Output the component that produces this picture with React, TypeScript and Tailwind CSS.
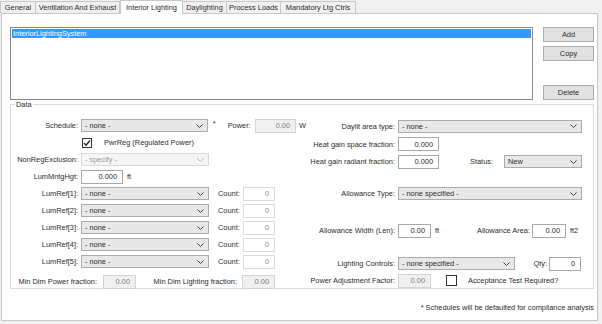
import React from 'react';

const tabs = [
  { label: 'General', width: 'w-[36px]' },
  { label: 'Ventilation And Exhaust', width: 'w-[84px]' },
  { label: 'Interior Lighting', width: 'w-[63px]', active: true },
  { label: 'Daylighting', width: 'w-[44px]' },
  { label: 'Process Loads', width: 'w-[54px]' },
  { label: 'Mandatory Ltg Ctrls', width: 'w-[75px]' },
];

function Chevron({ disabled }: { disabled?: boolean }) {
  return (
    <svg width="7" height="4" viewBox="0 0 7 4" className="shrink-0">
      <path
        d="M0.5 0.5 L3.5 3.5 L6.5 0.5"
        fill="none"
        stroke={disabled ? '#b4b4b4' : '#404040'}
        strokeWidth="1"
      />
    </svg>
  );
}

function Combo({
  value,
  className,
  disabled,
}: {
  value: string;
  className: string;
  disabled?: boolean;
}) {
  return (
    <div
      className={`flex h-[13px] items-center justify-between border pl-[3px] pr-[4px] ${
        disabled
          ? 'border-[#d9d9d9] bg-[#f5f5f5] text-[#9b9b9b]'
          : 'border-[#acacac] bg-[#e8e8e8] text-[#2b2b2b]'
      } ${className}`}
    >
      <span className="whitespace-nowrap">{value}</span>
      <Chevron disabled={disabled} />
    </div>
  );
}

function Field({
  value,
  className,
  kind = 'normal',
}: {
  value: string;
  className: string;
  kind?: 'normal' | 'disabled' | 'count';
}) {
  const look =
    kind === 'disabled'
      ? 'border-[#d4d4d4] bg-[#f0f0f0] text-[#7d7d7d]'
      : kind === 'count'
        ? 'border-[#dadada] bg-white text-[#8c8c8c]'
        : 'border-[#a8a8a8] bg-white text-[#2b2b2b]';
  return (
    <div className={`flex h-[14px] items-center justify-end border pr-[5px] ${look} ${className}`}>
      {value}
    </div>
  );
}

function CheckBox({ checked, className }: { checked?: boolean; className: string }) {
  return (
    <div className={`flex h-[10px] w-[10px] items-center justify-center border border-[#333333] bg-white ${className}`}>
      {checked && (
        <svg width="8" height="8" viewBox="0 0 8 8">
          <path d="M1 4 L3 6.2 L7 1.5" fill="none" stroke="#222" strokeWidth="1.3" />
        </svg>
      )}
    </div>
  );
}

function Label({ children, className }: { children: React.ReactNode; className: string }) {
  return <span className={`shrink-0 whitespace-nowrap text-right ${className}`}>{children}</span>;
}

export default function App() {
  return (
    <div className="h-[324px] w-[602px] overflow-hidden bg-[#f0f0f0] font-['Liberation_Sans',Arial,sans-serif] text-[7.4px] leading-[9px] text-[#2b2b2b]">
      {/* tab strip */}
      <div className="relative z-10 flex h-[13px] items-end">
        {tabs.map((t, i) =>
          t.active ? (
            <div
              key={t.label}
              className={`-mb-px flex h-[14px] items-center justify-center border-x border-t border-[#c8c8c8] bg-white ${t.width}`}
            >
              {t.label}
            </div>
          ) : (
            <div
              key={t.label}
              className={`flex h-[12px] items-center justify-center border-r border-t border-[#c8c8c8] bg-[#f0f0f0] ${
                i === 0 ? 'border-l' : ''
              } ${t.width}`}
            >
              {t.label}
            </div>
          ),
        )}
      </div>

      {/* panel */}
      <div className="ml-px h-[308px] w-[597px] border border-[#c8c8c8] bg-white pl-[8px] pt-[13px]">
        <div className="flex">
          <div className="h-[73px] w-[523px] border border-[#828790] bg-white p-px">
            <div className="h-[9px] bg-[#3399ff] px-px text-white">InteriorLightingSystem</div>
          </div>
          <div className="ml-[10px] flex h-[73px] w-[51px] flex-col justify-between">
            <div className="flex flex-col gap-[4px]">
              <button className="flex h-[15px] items-center justify-center border border-[#adadad] bg-[#e1e1e1]">
                Add
              </button>
              <button className="flex h-[15px] items-center justify-center border border-[#adadad] bg-[#e1e1e1]">
                Copy
              </button>
            </div>
            <button className="flex h-[15px] items-center justify-center border border-[#adadad] bg-[#e1e1e1]">
              Delete
            </button>
          </div>
        </div>

        {/* Data group */}
        <div className="relative mt-[4px] h-[185px] w-[584px] border border-[#dcdcdc] pt-[12px]">
          <span className="absolute left-[4px] top-[-5px] bg-white px-px">Data</span>
          <div className="flex">
            {/* left column */}
            <div className="flex w-[295px] flex-col">
              <div className="flex h-[17px] items-center">
                <Label className="w-[67px]">Schedule:</Label>
                <Combo value="- none -" className="ml-[3px] w-[128px]" />
                <span className="ml-[5px] w-[15px] self-start pt-[2px]">*</span>
                <span className="w-[28px]">Power:</span>
                <Field value="0.00" kind="disabled" className="w-[41px]" />
                <span className="ml-[3px]">W</span>
              </div>
              <div className="flex h-[17px] items-center">
                <CheckBox checked className="ml-[71px]" />
                <span className="ml-[12px]">PwrReg (Regulated Power)</span>
              </div>
              <div className="flex h-[17px] items-center">
                <Label className="w-[67px]">NonRegExclusion:</Label>
                <Combo value="- specify -" disabled className="ml-[3px] w-[128px]" />
              </div>
              <div className="flex h-[17px] items-center">
                <Label className="w-[67px]">LumMntgHgt:</Label>
                <Field value="0.000" className="ml-[3px] w-[42px]" />
                <span className="ml-[4px]">ft</span>
              </div>
              {[1, 2, 3, 4, 5].map((n) => (
                <div key={n} className="flex h-[17px] items-center">
                  <Label className="w-[67px]">LumRef[{n}]:</Label>
                  <Combo value="- none -" className="ml-[3px] w-[128px]" />
                  <span className="ml-[9px] w-[25px]">Count:</span>
                  <Field value="0" kind="count" className="w-[32px]" />
                </div>
              ))}
              <div className="mt-[3px] flex h-[17px] items-center">
                <Label className="w-[86px]">Min Dim Power fraction:</Label>
                <Field value="0.00" kind="disabled" className="ml-[6px] w-[33px]" />
                <Label className="w-[101px]">Min Dim Lighting fraction:</Label>
                <Field value="0.00" kind="disabled" className="ml-[5px] w-[33px]" />
              </div>
            </div>

            {/* right column */}
            <div className="flex flex-1 flex-col">
              <div className="flex h-[18px] items-center">
                <Label className="w-[89px]">Daylit area type:</Label>
                <Combo value="- none -" className="ml-[3px] w-[184px]" />
              </div>
              <div className="flex h-[18px] items-center">
                <Label className="w-[89px]">Heat gain space fraction:</Label>
                <Field value="0.000" className="ml-[3px] w-[41px]" />
              </div>
              <div className="flex h-[17px] items-center">
                <Label className="w-[89px]">Heat gain radiant fraction:</Label>
                <Field value="0.000" className="ml-[3px] w-[41px]" />
                <span className="ml-[31px] w-[34px]">Status:</span>
                <Combo value="New" className="w-[78px]" />
              </div>
              <div className="mt-[15px] flex h-[17px] items-center">
                <Label className="w-[89px]">Allowance Type:</Label>
                <Combo value="- none specified -" className="ml-[3px] w-[184px]" />
              </div>
              <div className="mt-[20px] flex h-[17px] items-center">
                <Label className="w-[89px]">Allowance Width (Len):</Label>
                <Field value="0.00" className="ml-[3px] w-[33px]" />
                <span className="w-[20px] pl-[4px]">ft</span>
                <Label className="w-[79px]">Allowance Area:</Label>
                <Field value="0.00" className="ml-[2px] w-[34px]" />
                <span className="ml-[4px]">ft2</span>
              </div>
              <div className="mt-[16px] flex h-[17px] items-center">
                <Label className="w-[89px]">Lighting Controls:</Label>
                <Combo value="- none specified -" className="ml-[3px] w-[117px]" />
                <Label className="w-[34px] pr-[2px]">Qty:</Label>
                <Field value="0" className="w-[32px]" />
              </div>
              <div className="flex h-[17px] items-center">
                <Label className="w-[89px]">Power Adjustment Factor:</Label>
                <Field value="0.00" kind="disabled" className="ml-[3px] w-[33px]" />
                <CheckBox className="ml-[15px] h-[11px] w-[11px]" />
                <span className="ml-[11px]">Acceptance Test Required?</span>
              </div>
            </div>
          </div>
        </div>

        <div className="mt-[14px] w-[584px] text-right">
          * Schedules will be defaulted for compliance analysis
        </div>
      </div>
    </div>
  );
}
